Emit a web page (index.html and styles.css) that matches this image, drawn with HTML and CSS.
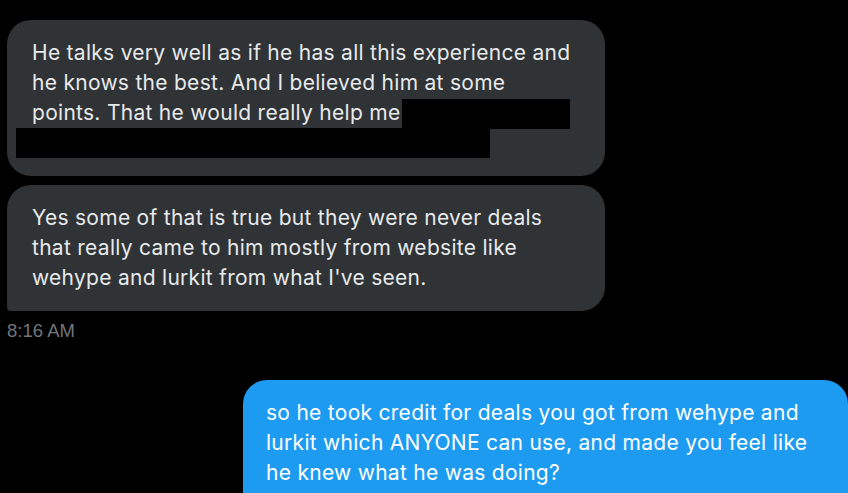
FILE: index.html
```html
<!DOCTYPE html>
<html>
<head>
    <meta charset="utf-8">
    <title>Messages</title>
    <link rel="stylesheet" href="styles.css">
</head>
<body>
    <div class="thread">
        <div class="msg received first">
            He talks very well as if he has all this experience and<br>
            he knows the best. And I believed him at some<br>
            points. That he would really help me<br>
            &nbsp;
            <span class="redact redact-a"></span>
            <span class="redact redact-b"></span>
        </div>

        <div class="msg received last">
            Yes some of that is true but they were never deals<br>
            that really came to him mostly from website like<br>
            wehype and lurkit from what I've seen.
        </div>

        <div class="time">8:16 AM</div>

        <div class="msg sent">
            so he took credit for deals you got from wehype and<br>
            lurkit which ANYONE can use, and made you feel like<br>
            he knew what he was doing?
        </div>
    </div>
</body>
</html>
```

FILE: styles.css
```css
body {
    margin: 0;
    background: #000;
    font-family: Inter, "Open Sans", sans-serif;
    overflow: hidden;
}

.thread {
    display: flex;
    flex-direction: column;
    padding: 20px 0 0 7px;
}

.msg {
    position: relative;
    box-sizing: border-box;
    padding: 18px 20px 18px 25px;
    font-size: 21px;
    line-height: 30px;
    letter-spacing: 0.28px;
    border-radius: 24px;
    white-space: nowrap;
}

.received {
    width: 598px;
    background: #2f3336;
    color: #e7e9ea;
}

.received.last {
    margin-top: 9px;
    border-bottom-left-radius: 4px;
}

.redact {
    position: absolute;
    background: #000;
}

.redact-a {
    left: 395px;
    top: 79px;
    width: 168px;
    height: 30px;
}

.redact-b {
    left: 9px;
    top: 108px;
    width: 474px;
    height: 30px;
}

.time {
    margin-top: 10px;
    font-family: "Liberation Sans", Arial, sans-serif;
    font-size: 18.5px;
    line-height: 20px;
    color: #71767b;
}

.sent {
    align-self: flex-end;
    width: 605px;
    margin-top: 39px;
    padding-left: 23px;
    padding-bottom: 40px;
    background: #1d9bf0;
    color: #fff;
}
```
